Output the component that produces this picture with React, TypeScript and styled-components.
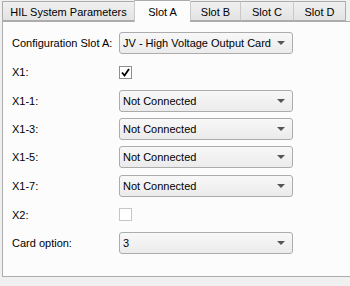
import React from 'react'
import styled, { createGlobalStyle } from 'styled-components'

const GlobalStyle = createGlobalStyle`
  html, body {
    margin: 0;
    padding: 0;
    background: #f0f0f0;
    font-family: "Liberation Sans", Arial, sans-serif;
    font-size: 11px;
    color: #000;
  }
`

const Window = styled.div`
  width: 350px;
  height: 286px;
  overflow: hidden;
  background: #f0f0f0;
  padding: 0 0 0 2px;
  box-sizing: border-box;
`

const TabBar = styled.div`
  display: flex;
  align-items: flex-end;
  height: 22px;
  position: relative;
  z-index: 1;
`

const Tab = styled.div<{ selected?: boolean; width: number }>`
  width: ${({ width }) => width}px;
  flex: none;
  box-sizing: border-box;
  display: flex;
  align-items: center;
  justify-content: center;
  font-size: 11px;
  border: 1px solid #acacac;
  border-right: none;
  padding-top: 1px;
  height: ${({ selected }) => (selected ? 22 : 20)}px;
  margin-bottom: ${({ selected }) => (selected ? 0 : 1)}px;
  background: ${({ selected }) => (selected ? '#fcfcfc' : 'linear-gradient(#f0f0f0, #e3e3e3)')};
  border-bottom: ${({ selected }) => (selected ? 'none' : '1px solid #acacac')};
  &:last-child {
    border-right: 1px solid #acacac;
  }
  & + & {
    border-left: ${({ selected }) => (selected ? '1px solid #acacac' : '1px solid #c8c8c8')};
  }
`

const Panel = styled.div`
  margin-top: -1px;
  width: 360px;
  height: 256px;
  box-sizing: border-box;
  background: #fcfcfc;
  border: 1px solid #acacac;
  padding: 7px 0 0 9px;
`

const Form = styled.div`
  display: flex;
  flex-direction: column;
`

const Row = styled.div<{ h: number }>`
  display: flex;
  align-items: center;
  height: ${({ h }) => h}px;
`

const Label = styled.div`
  width: 107px;
  flex: none;
  font-size: 11px;
  white-space: nowrap;
`

const Combo = styled.div`
  width: 174px;
  height: 22px;
  box-sizing: border-box;
  border: 1px solid #acacac;
  border-radius: 3px;
  background: linear-gradient(#f8f8f8, #ebebeb);
  display: flex;
  align-items: center;
  justify-content: space-between;
  padding: 0 7px 0 3px;
  font-size: 11px;
  white-space: nowrap;
`

const Arrow = styled.div`
  width: 0;
  height: 0;
  border-left: 4px solid transparent;
  border-right: 4px solid transparent;
  border-top: 4px solid #555;
`

const Check = styled.div<{ faded?: boolean }>`
  width: 13px;
  height: 13px;
  box-sizing: border-box;
  border: 1px solid ${({ faded }) => (faded ? '#c6c6c6' : '#8e8f8f')};
  background: #fff;
  display: flex;
  align-items: center;
  justify-content: center;
`

const ComboBox = ({ value }: { value: string }) => (
  <Combo>
    <span>{value}</span>
    <Arrow />
  </Combo>
)

const tabs = [
  { name: 'HIL System Parameters', width: 132 },
  { name: 'Slot A', width: 56, selected: true },
  { name: 'Slot B', width: 50 },
  { name: 'Slot C', width: 53 },
  { name: 'Slot D', width: 53 },
]

const App = () => {
  return (
    <Window>
      <GlobalStyle />
      <TabBar>
        {tabs.map((t) => (
          <Tab key={t.name} width={t.width} selected={t.selected}>
            {t.name}
          </Tab>
        ))}
      </TabBar>
      <Panel>
        <Form>
          <Row h={28}>
            <Label>Configuration Slot A:</Label>
            <ComboBox value="JV - High Voltage Output Card" />
          </Row>
          <Row h={30}>
            <Label>X1:</Label>
            <Check>
              <svg width="9" height="9" viewBox="0 0 9 9">
                <path d="M1 4.5 L3.5 7.5 L8 1" fill="none" stroke="#000" strokeWidth="1.8" />
              </svg>
            </Check>
          </Row>
          <Row h={28}>
            <Label>X1-1:</Label>
            <ComboBox value="Not Connected" />
          </Row>
          <Row h={28}>
            <Label>X1-3:</Label>
            <ComboBox value="Not Connected" />
          </Row>
          <Row h={28}>
            <Label>X1-5:</Label>
            <ComboBox value="Not Connected" />
          </Row>
          <Row h={29}>
            <Label>X1-7:</Label>
            <ComboBox value="Not Connected" />
          </Row>
          <Row h={29}>
            <Label>X2:</Label>
            <Check faded />
          </Row>
          <Row h={28}>
            <Label>Card option:</Label>
            <ComboBox value="3" />
          </Row>
        </Form>
      </Panel>
    </Window>
  )
}

export default App
